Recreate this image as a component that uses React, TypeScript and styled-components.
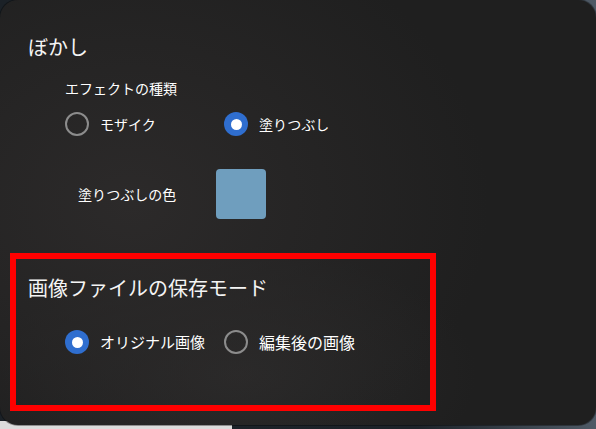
import styled, { createGlobalStyle } from 'styled-components';

const GlobalStyle = createGlobalStyle`
  html, body {
    margin: 0;
    height: 100%;
  }
  body {
    background:
      linear-gradient(#dcdcdc, #dcdcdc) 0 100% / 232px 8px no-repeat,
      linear-gradient(90deg, #1b2127 0%, #1d2329 70%, #4f5a66 100%);
    font-family: "Noto Sans CJK JP", "Noto Sans", sans-serif;
    color: #ffffff;
  }
`;

const StyledWindow = styled.div`
  width: 596px;
  height: 425px;
  box-sizing: border-box;
  border-radius: 18px;
  background:
    radial-gradient(ellipse 60% 70% at 22% 48%, #2c2a2a 0%, rgba(43, 41, 41, 0) 100%),
    radial-gradient(ellipse 40% 30% at 40% 88%, #2a2929 0%, rgba(41, 40, 40, 0) 100%),
    #1f1f1f;
  box-shadow: 0 0 0 1px rgba(0, 0, 0, 0.35);
  display: flex;
  flex-direction: column;
  padding-top: 33px;
`;

const StyledSection = styled.section`
  padding-left: 28px;
  display: flex;
  flex-direction: column;
`;

const StyledTitle = styled.h2`
  margin: 0;
  font-size: 20px;
  line-height: 28px;
  font-weight: 400;
  color: #f4f4f4;
`;

const StyledGroupLabel = styled.div`
  margin: 17px 0 0 37px;
  font-size: 14px;
  line-height: 20px;
`;

const StyledRadioRow = styled.div<{ $top: number }>`
  margin: ${(p) => p.$top}px 0 0 37px;
  display: grid;
  grid-template-columns: 159px 159px;
  align-items: center;
`;

const StyledOption = styled.label<{ $size: number }>`
  display: flex;
  align-items: center;
  gap: 11px;
  font-size: ${(p) => p.$size}px;
  line-height: 24px;
  cursor: pointer;
`;

const StyledRadio = styled.span<{ $checked: boolean }>`
  width: 24px;
  height: 24px;
  box-sizing: border-box;
  border-radius: 50%;
  flex-shrink: 0;
  display: flex;
  align-items: center;
  justify-content: center;
  background: ${(p) => (p.$checked ? '#2f6ecf' : 'transparent')};
  border: ${(p) => (p.$checked ? 'none' : '2px solid #8c8c8c')};
  &::after {
    content: '';
    display: ${(p) => (p.$checked ? 'block' : 'none')};
    width: 11px;
    height: 11px;
    border-radius: 50%;
    background: #ffffff;
  }
`;

const StyledColorRow = styled.div`
  margin: 33px 0 0 50px;
  display: flex;
  align-items: center;
  font-size: 14px;
`;

const StyledColorLabel = styled.span`
  width: 138px;
`;

const StyledSwatch = styled.button`
  width: 50px;
  height: 50px;
  border: none;
  border-radius: 4px;
  background: #6f9ebe;
  padding: 0;
`;

const StyledHighlight = styled.section`
  margin: 34px 0 0 10px;
  width: 426px;
  height: 158px;
  box-sizing: border-box;
  border: 6px solid #ff0000;
  padding: 15px 0 0 12px;
  display: flex;
  flex-direction: column;
`;

const StyledHighlightRow = styled.div`
  margin: 28px 0 0 37px;
  display: grid;
  grid-template-columns: 159px 159px;
  align-items: center;
`;

const Option = ({ label, checked, size = 14 }: { label: string; checked?: boolean; size?: number }) => (
  <StyledOption $size={size}>
    <StyledRadio $checked={!!checked} />
    <span>{label}</span>
  </StyledOption>
);

const App = () => {
  return (
    <>
      <GlobalStyle />
      <StyledWindow>
        <StyledSection>
          <StyledTitle>ぼかし</StyledTitle>
          <StyledGroupLabel>エフェクトの種類</StyledGroupLabel>
          <StyledRadioRow $top={14}>
            <Option label="モザイク" />
            <Option label="塗りつぶし" checked />
          </StyledRadioRow>
          <StyledColorRow>
            <StyledColorLabel>塗りつぶしの色</StyledColorLabel>
            <StyledSwatch aria-label="塗りつぶしの色" />
          </StyledColorRow>
        </StyledSection>
        <StyledHighlight>
          <StyledTitle>画像ファイルの保存モード</StyledTitle>
          <StyledHighlightRow>
            <Option label="オリジナル画像" checked size={15} />
            <Option label="編集後の画像" size={16} />
          </StyledHighlightRow>
        </StyledHighlight>
      </StyledWindow>
    </>
  );
};

export default App;
